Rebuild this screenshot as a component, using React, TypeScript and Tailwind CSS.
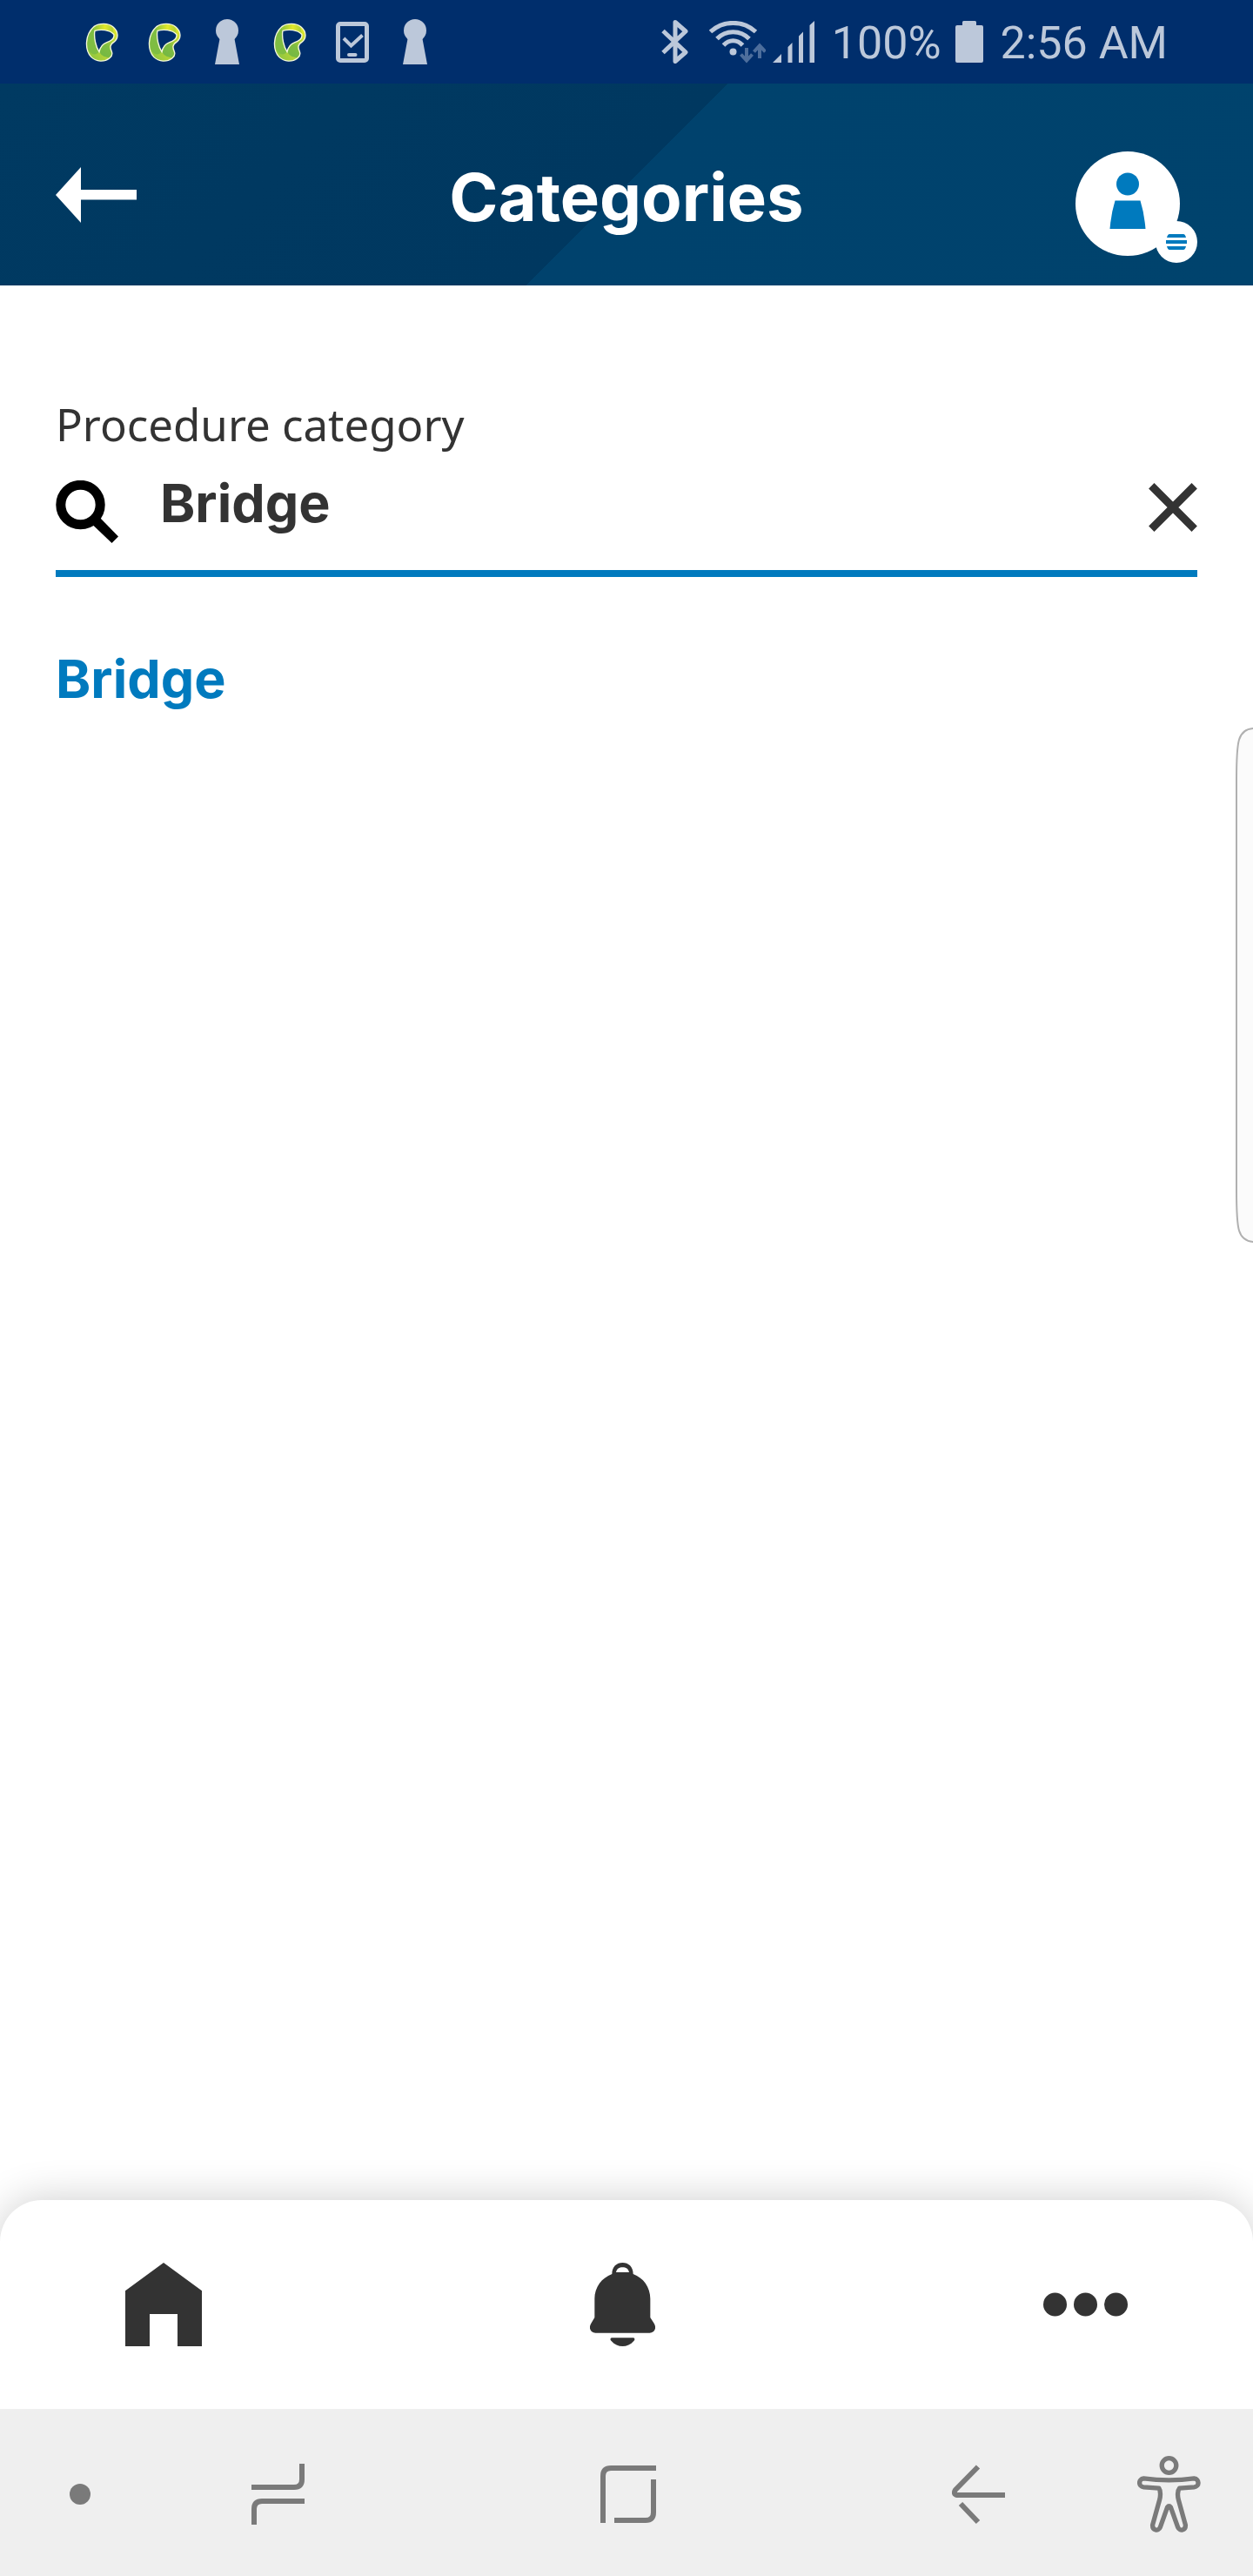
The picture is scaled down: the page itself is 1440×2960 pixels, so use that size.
import { useState } from "react";

function LeafIcon() {
  return (
    <svg viewBox="-2 -2 112 134" className="h-[45px] w-[38px]" aria-hidden="true">
      <defs>
        <linearGradient id="leafBand" x1="0" y1="0.8" x2="1" y2="0.1">
          <stop offset="0" stopColor="#8cc63f" />
          <stop offset="0.45" stopColor="#b9d437" />
          <stop offset="1" stopColor="#e0e62a" />
        </linearGradient>
        <linearGradient id="leafDrop" x1="1" y1="0" x2="0.3" y2="1">
          <stop offset="0" stopColor="#dfe52c" />
          <stop offset="0.6" stopColor="#7fbc42" />
          <stop offset="1" stopColor="#74b843" />
        </linearGradient>
        <linearGradient id="leafTop" x1="0" y1="0" x2="1" y2="0">
          <stop offset="0" stopColor="#8fc53e" />
          <stop offset="0.55" stopColor="#e3e829" />
          <stop offset="1" stopColor="#a9ce39" />
        </linearGradient>
      </defs>
      <path
        fillRule="evenodd"
        fill="url(#leafBand)"
        d="M28 11C45-1 76-1 92 12C112 28 112 52 96 64C80 74 82 84 88 98C91 106 90 112 80 120C62 134 35 132 18 116C-5 92-5 40 28 11ZM30 26C50 20 80 22 95 38C98 50 88 60 70 66C54 72 48 84 45 98C34 82 26 50 30 26Z"
      />
      <path fill="url(#leafTop)" d="M28 13C46 2 76 2 91 14L95 36C80 21 50 19 30 25Z" />
      <path fill="url(#leafDrop)" d="M105 38C106 54 100 60 92 65C80 74 80 84 86 98C89 112 84 117 78 118C60 116 50 108 46 98C49 84 56 73 71 67C88 61 98 52 97 38Z" />
      <path fill="#7fbd42" d="M26 14C2 34-4 70 8 92C18 108 32 112 45 98C34 82 26 50 30 25Z" />
      <path
        fill="none"
        stroke="#f4f8dc"
        strokeWidth="4"
        d="M28 11C45-1 76-1 92 12C112 28 112 52 96 64C80 74 82 84 88 98C91 106 90 112 80 120C62 134 35 132 18 116C-5 92-5 40 28 11ZM30 26C50 20 80 22 95 38C98 50 88 60 70 66C54 72 48 84 45 98C34 82 26 50 30 26Z"
      />
    </svg>
  );
}

function KeyholeIcon() {
  return (
    <svg viewBox="0 0 28 52" className="h-[52px] w-7" fill="#bcc8da" aria-hidden="true">
      <circle cx="14" cy="13" r="13" />
      <path d="M6 20h16l6 32H0z" />
    </svg>
  );
}

function DeviceCheckIcon() {
  return (
    <svg viewBox="0 0 38 47" className="h-[47px] w-[38px]" fill="none" stroke="#bcc8da" aria-hidden="true">
      <rect x="2.5" y="2.5" width="33" height="42" rx="2.5" strokeWidth="5" />
      <path d="M9 19l8.500 8.500L30.500 15.500" strokeWidth="4" />
      <path d="M15 38h7.500" strokeWidth="4" strokeLinecap="round" />
    </svg>
  );
}

function BluetoothIcon() {
  return (
    <svg viewBox="0 0 31 50" className="h-[50px] w-[31px]" fill="none" stroke="#bcc8da" strokeWidth="5" strokeLinejoin="round" aria-hidden="true">
      <path d="M2 12.500L28 37L16 47.500V2.500L28 13L2 37.500" />
    </svg>
  );
}

function WifiIcon() {
  return (
    <svg viewBox="0 0 65 49" className="h-[49px] w-[65px]" fill="none" stroke="#bcc8da" aria-hidden="true">
      <path d="M1.500 12.500C16-1 39-1 53.500 12.500" strokeWidth="5" />
      <path d="M9 20.500C19 10 36 10 46 20.500" strokeWidth="5" />
      <path d="M16.500 28C23 21 32 21 38.500 28" strokeWidth="5" />
      <circle cx="27.500" cy="35.500" r="4" fill="#bcc8da" strokeWidth="0" />
      <g stroke="#4d6e9c" strokeWidth="4">
        <path d="M43 31v14M36.500 38.500l6.500 7l6.500-7" />
        <path d="M58 43V29M51.500 35.500l6.500-7l6.500 7" />
      </g>
    </svg>
  );
}

function SignalIcon() {
  return (
    <svg viewBox="0 0 48 48" className="size-12" fill="#bcc8da" aria-hidden="true">
      <path d="M0 48L10 38V48ZM17.500 48V30L22.500 25V48ZM30 48V17.500L35 12.500V48ZM42.500 48V5L48 0V48Z" />
    </svg>
  );
}

function BatteryIcon() {
  return (
    <svg viewBox="0 0 32 48" className="h-12 w-8" fill="#bcc8da" aria-hidden="true">
      <path d="M9.500 0h13a1.500 1.500 0 0 1 1.500 1.500V5h6a2 2 0 0 1 2 2v39a2 2 0 0 1-2 2H2a2 2 0 0 1-2-2V7a2 2 0 0 1 2-2h6V1.500A1.500 1.500 0 0 1 9.500 0Z" />
    </svg>
  );
}

function StatusBar() {
  return (
    <div className="flex h-24 items-center justify-between bg-[#002e6c] pr-[98px] pl-[81px] font-['Roboto',sans-serif] text-[52px] leading-none text-[#bcc8da]">
      <div className="grid grid-cols-[repeat(6,72px)] items-center justify-items-center">
        <LeafIcon />
        <LeafIcon />
        <KeyholeIcon />
        <LeafIcon />
        <DeviceCheckIcon />
        <KeyholeIcon />
      </div>
      <div className="flex items-center">
        <BluetoothIcon />
        <span className="ml-6 flex"><WifiIcon /></span>
        <span className="ml-2 flex"><SignalIcon /></span>
        <span className="ml-5 pt-1">100%</span>
        <span className="ml-4 flex"><BatteryIcon /></span>
        <span className="ml-5 pt-1">2:56 AM</span>
      </div>
    </div>
  );
}

function Header() {
  return (
    <header className="grid h-[232px] grid-cols-[1fr_auto_1fr] items-center bg-[linear-gradient(135deg,#003a62_0%,#003860_50%,#00426d_50%,#00436d_100%)] px-16">
      <button type="button" aria-label="Back" className="mt-6 justify-self-start">
        <svg viewBox="0 0 93 64" className="h-16 w-[93px]" fill="#fff" aria-hidden="true">
          <path d="M0 32L29 0V26H93V37.500H29V64Z" />
        </svg>
      </button>
      <h1 className="pt-7 font-['Inter',sans-serif] text-[76px] leading-none font-bold text-white">Categories</h1>
      <button type="button" aria-label="Profile menu" className="relative mt-11 h-32 w-[140px] justify-self-end">
        <span className="flex size-[120px] items-center justify-center rounded-full bg-white">
          <svg viewBox="0 0 42 66" className="mb-2 h-[66px] w-[42px]" fill="#007abe" aria-hidden="true">
            <circle cx="21" cy="14.500" r="13" />
            <path d="M6.500 33.500H35.500Q40 48 41.500 66H0.500Q2 48 6.500 33.500Z" />
          </svg>
        </span>
        <span className="absolute right-0 -bottom-1 flex size-12 items-center justify-center rounded-full bg-white">
          <svg viewBox="0 0 24 18" className="h-[18px] w-6" fill="#007abe" aria-hidden="true">
            <path d="M4 0H20Q22 0 23 4H1Q2 0 4 0ZM0 7H24V11H0ZM1 14H23Q22 18 20 18H4Q2 18 1 14Z" />
          </svg>
        </span>
      </button>
    </header>
  );
}

function CategorySearch() {
  const [query, setQuery] = useState("Bridge");
  return (
    <main className="relative flex-1 px-16 pt-[124px]">
      <label htmlFor="category" className="block font-['Noto_Sans',sans-serif] text-[51px] leading-[70px] text-[#333]">
        Procedure category
      </label>
      <div className="flex h-[141px] items-start border-b-8 border-[#007abe] pt-4">
        <svg viewBox="0 0 72 72" className="mt-[14px] size-[72px] shrink-0" aria-hidden="true">
          <circle cx="28.500" cy="28" r="22.700" fill="none" stroke="#000" strokeWidth="11" />
          <path d="M43 51.500L51.500 43.500L72 64.500L64.500 72Z" />
        </svg>
        <input
          id="category"
          type="text"
          value={query}
          onChange={(e) => setQuery(e.target.value)}
          className="ml-12 h-20 min-w-0 flex-1 bg-transparent font-['Inter',sans-serif] text-[61px] leading-[80px] font-bold text-[#333] outline-none"
        />
        <button type="button" aria-label="Clear" onClick={() => setQuery("")} className="mt-[17px] shrink-0">
          <svg viewBox="0 0 56 56" className="size-14" stroke="#333" strokeWidth="9" aria-hidden="true">
            <path d="M3.300 3.300L52.700 52.700M52.700 3.300L3.300 52.700" />
          </svg>
        </button>
      </div>
      <ul className="pt-[77px]">
        <li>
          <a href="#bridge" className="font-['Inter',sans-serif] text-[61px] leading-[80px] font-bold text-[#007abe]">Bridge</a>
        </li>
      </ul>
      <div className="absolute top-[508px] right-0 h-[592px] w-5 overflow-hidden">
        <svg viewBox="0 0 20 592" className="h-[592px] w-5" fill="#fbfbfb" stroke="#b0b0b0" strokeWidth="2" aria-hidden="true">
          <path d="M22 1Q8 1 4 14Q1 24 1 60V532Q1 568 4 578Q8 591 22 591" />
        </svg>
      </div>
    </main>
  );
}

function TabBar() {
  return (
    <nav aria-label="Main" className="relative flex h-60 items-center justify-between rounded-t-[48px] bg-white px-36 shadow-[0_0_48px_rgba(0,0,0,0.2)]">
      <button type="button" aria-label="Home">
        <svg viewBox="0 0 88 96" className="h-24 w-[88px]" fill="#333" aria-hidden="true">
          <path d="M44 0L88 32.300V96H60V59H28V96H0V32.300Z" />
        </svg>
      </button>
      <button type="button" aria-label="Notifications">
        <svg viewBox="0 0 225 288" className="h-24 w-[75px]" fill="#333" aria-hidden="true">
          <path
            fillRule="evenodd"
            d="M76 39C76 14 92 0 112.500 0S149 14 149 39C184 52 208 84 208 124V189L221 209C232 228 220 242 206 242H19C5 242-7 228 4 209L16 189V124C16 84 41 52 76 39ZM90 33H135C132 21 124 16 112.500 16S93 21 90 33Z"
          />
          <path d="M77 259H148C155 259 156 265 151 270C130 294 95 294 74 270C68 265 70 259 77 259Z" />
        </svg>
      </button>
      <button type="button" aria-label="More">
        <svg viewBox="0 0 97 28" className="h-7 w-[97px]" fill="#333" aria-hidden="true">
          <circle cx="13.500" cy="14" r="13.500" />
          <circle cx="48.500" cy="14" r="13.500" />
          <circle cx="83.500" cy="14" r="13.500" />
        </svg>
      </button>
    </nav>
  );
}

function SystemBar() {
  return (
    <nav aria-label="System" className="relative flex h-48 items-center bg-[#efefef] pt-1">
      <button type="button" aria-label="Toggle bar" className="flex w-[184px] justify-center">
        <span className="size-6 rounded-full bg-[#7a7a7a]" />
      </button>
      <div className="flex flex-1 items-center justify-between pr-[91px] pl-[105px]">
        <button type="button" aria-label="Recent apps">
          <svg viewBox="0 0 61 70" className="h-[70px] w-[61px]" fill="none" stroke="#7a7a7a" strokeWidth="6" aria-hidden="true">
            <path d="M0 27H49Q58 27 58 18V0M61 43H12Q3 43 3 52V70" />
          </svg>
        </button>
        <button type="button" aria-label="Home screen">
          <svg viewBox="0 0 64 66" className="h-[66px] w-16" fill="none" stroke="#7a7a7a" strokeWidth="6" aria-hidden="true">
            <path d="M3 66V12Q3 3 12 3H64M61 16V54Q61 63 52 63H16" />
          </svg>
        </button>
        <button type="button" aria-label="System back">
          <svg viewBox="0 0 61 69" className="h-[69px] w-[61px]" fill="none" stroke="#7a7a7a" strokeWidth="6" aria-hidden="true">
            <path d="M61 35H6Q1 34 4 29L30 2.500M10 45L30 66" />
          </svg>
        </button>
      </div>
      <button type="button" aria-label="Accessibility" className="flex w-[194px] justify-center">
        <svg viewBox="0 0 220 265" className="h-[88px] w-[73px]" fill="none" stroke="#7a7a7a" strokeWidth="16" strokeLinejoin="round" aria-hidden="true">
          <circle cx="110" cy="33" r="25" />
          <path d="M22 78Q66 84 110 84Q154 84 197 78C216 80 216 106 197 108L146 112C139 120 139 140 143 153L167 239C168 258 147 262 141 248L116 178Q110 170 104 178L79 248C73 262 52 258 53 239L77 153C81 140 81 120 75 112L22 108C3 106 3 80 22 78Z" />
        </svg>
      </button>
    </nav>
  );
}

export default function App() {
  return (
    <div className="flex min-h-screen flex-col bg-white">
      <StatusBar />
      <Header />
      <CategorySearch />
      <TabBar />
      <SystemBar />
    </div>
  );
}
